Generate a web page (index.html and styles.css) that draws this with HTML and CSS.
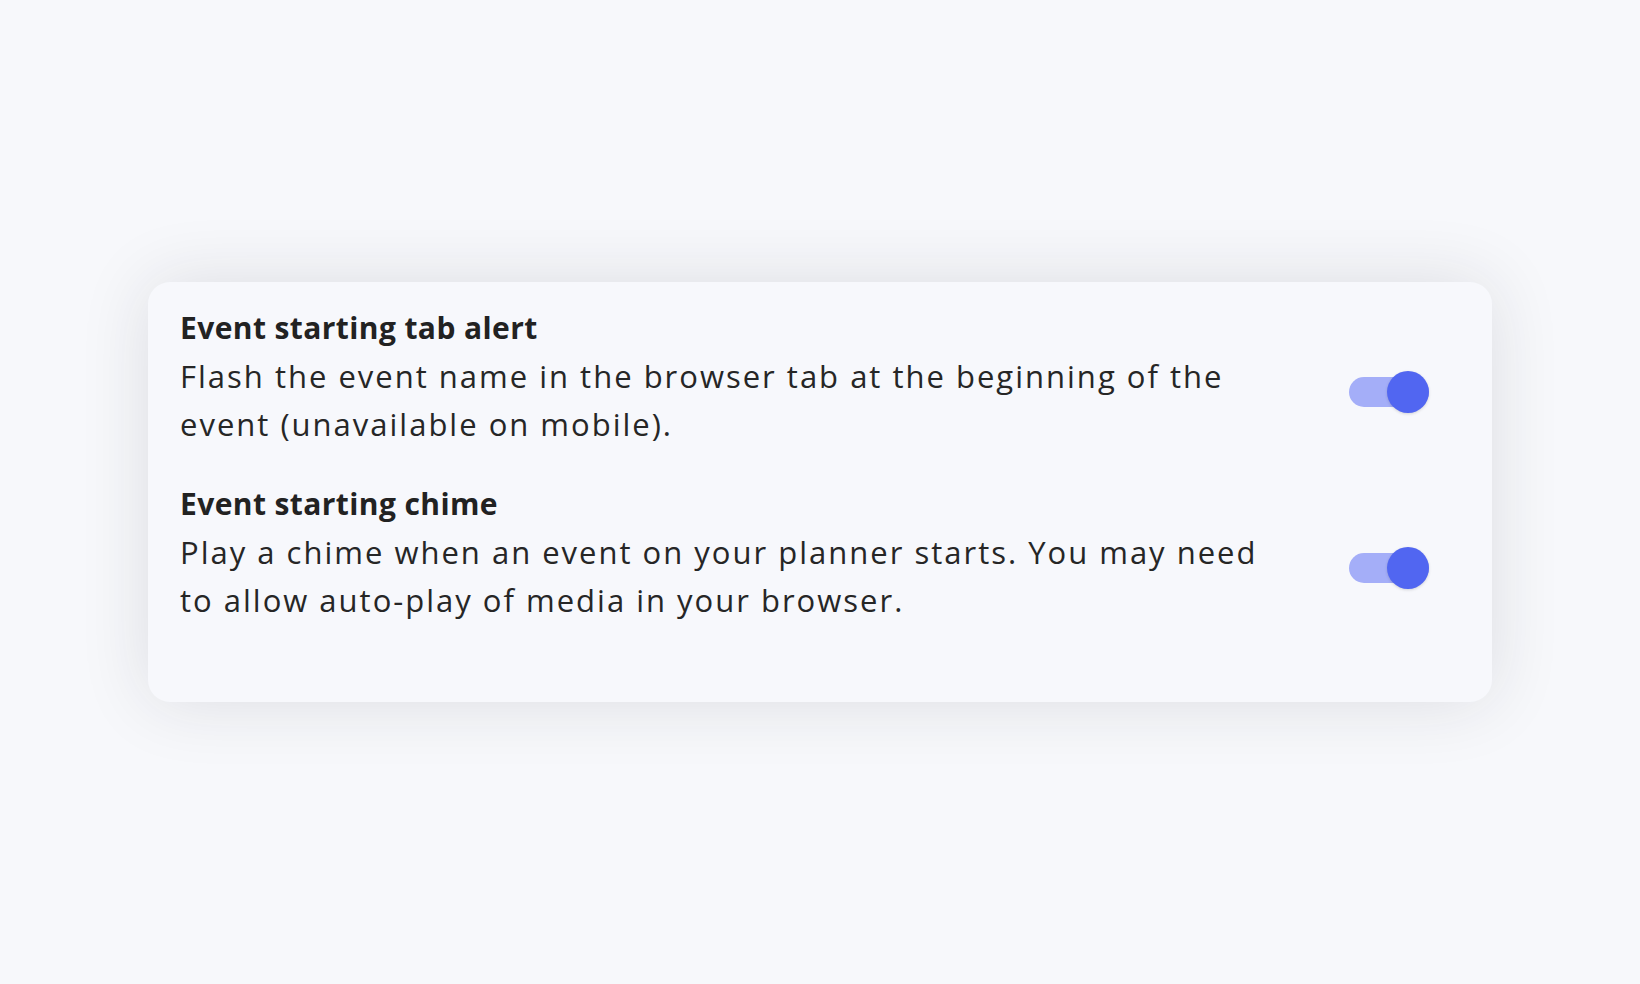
FILE: index.html
```html
<!DOCTYPE html>
<html lang="en">
<head>
  <meta charset="UTF-8">
  <title>Notification settings</title>
  <link rel="stylesheet" href="styles.css">
</head>
<body>
  <div class="card">
    <div class="setting">
      <div class="setting-text">
        <div class="setting-title">Event starting tab alert</div>
        <div class="setting-desc">Flash the event name in the browser tab at the beginning of the event (unavailable on mobile).</div>
      </div>
      <div class="toggle on"><span class="knob"></span></div>
    </div>

    <div class="setting">
      <div class="setting-text">
        <div class="setting-title">Event starting chime</div>
        <div class="setting-desc">Play a chime when an event on your planner starts. You may need to allow auto-play of media in your browser.</div>
      </div>
      <div class="toggle on"><span class="knob"></span></div>
    </div>
  </div>
</body>
</html>
```

FILE: styles.css
```css
body {
  font-family: 'Open Sans', sans-serif;
  background: #f7f8fb;
  margin: 0;
  padding: 0;
  height: 100vh;
  display: flex;
  align-items: center;
  justify-content: center;
  color: #222;
}
.card {
  width: 1344px;
  height: 420px;
  box-sizing: border-box;
  background: #f7f8fc;
  border-radius: 22px;
  padding: 22px 63px 0 32px;
  box-shadow: 0 0 70px rgba(30,30,50,0.12);
  display: flex;
  flex-direction: column;
  gap: 32px;
}
.setting {
  display: flex;
  align-items: center;
  justify-content: space-between;
}
.setting-text {
  width: 1100px;
}
.setting-title {
  font-size: 30px;
  font-weight: 700;
  line-height: 48px;
  letter-spacing: 0.4px;
}
.setting-desc {
  font-size: 31px;
  line-height: 48px;
  letter-spacing: 2px;
  color: #262626;
}
.toggle {
  position: relative;
  width: 80px;
  height: 30px;
  border-radius: 15px;
  background: #a4aef8;
  margin-top: 32px;
}
.knob {
  position: absolute;
  right: 0;
  top: -6px;
  width: 42px;
  height: 42px;
  border-radius: 50%;
  background: #5166f1;
  box-shadow: 0 1px 3px rgba(0,0,0,0.15);
}
```
